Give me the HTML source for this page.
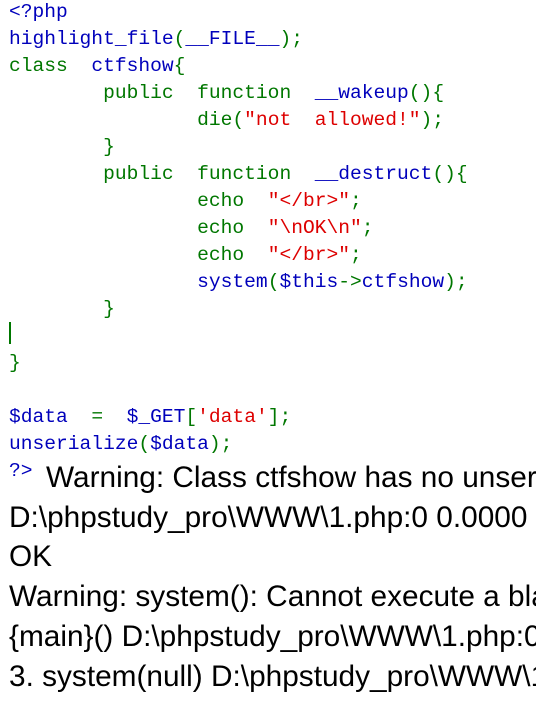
<!DOCTYPE html>
<html><head><meta charset="utf-8"><style>
html,body{margin:0;background:#fff;width:536px;height:706px;overflow:hidden}
.wrap{position:relative;width:536px;height:706px;overflow:hidden}
pre{margin:0;padding:0 0 0 9px;font-family:"Liberation Mono",monospace;font-size:19.6px;line-height:27px;white-space:pre;position:absolute;top:-1px;left:0}
.b{color:#0000BB}.g{color:#007700}.r{color:#DD0000}
.out{position:absolute;left:9px;top:458px;width:527px;overflow:hidden;font-family:"Liberation Sans",sans-serif;font-size:29.8px;line-height:39.7px;color:#000;white-space:nowrap}
.cur{position:absolute;left:9px;top:322px;width:1.5px;height:22px;background:#007700}
</style></head><body><div class="wrap">
<pre><span class="b">&lt;?php</span>
<span class="b">highlight_file</span><span class="g">(</span><span class="b">__FILE__</span><span class="g">);</span>
<span class="g">class  </span><span class="b">ctfshow</span><span class="g">{</span>
<span class="g">        public  function  </span><span class="b">__wakeup</span><span class="g">(){</span>
<span class="g">                die(</span><span class="r">"not  allowed!"</span><span class="g">);</span>
<span class="g">        }</span>
<span class="g">        public  function  </span><span class="b">__destruct</span><span class="g">(){</span>
<span class="g">                echo  </span><span class="r">"&lt;/br&gt;"</span><span class="g">;</span>
<span class="g">                echo  </span><span class="r">"\nOK\n"</span><span class="g">;</span>
<span class="g">                echo  </span><span class="r">"&lt;/br&gt;"</span><span class="g">;</span>
<span class="g">                </span><span class="b">system</span><span class="g">(</span><span class="b">$this</span><span class="g">-&gt;</span><span class="b">ctfshow</span><span class="g">);</span>
<span class="g">        }</span>

<span class="g">}</span>

<span class="b">$data  </span><span class="g">=  </span><span class="b">$_GET</span><span class="g">[</span><span class="r">'data'</span><span class="g">];</span>
<span class="b">unserialize</span><span class="g">(</span><span class="b">$data</span><span class="g">);</span>
<span class="b">?&gt;</span></pre>
<div class="cur"></div>
<div class="out"><span style="margin-left:37px">Warning: Class ctfshow has no unserializer</span><br>D:\phpstudy_pro\WWW\1.php:0 0.0000<br>OK<br>Warning: system(): Cannot execute a blank command<br>{main}() D:\phpstudy_pro\WWW\1.php:0<br>3. system(null) D:\phpstudy_pro\WWW\1.php</div>
</div></body></html>
